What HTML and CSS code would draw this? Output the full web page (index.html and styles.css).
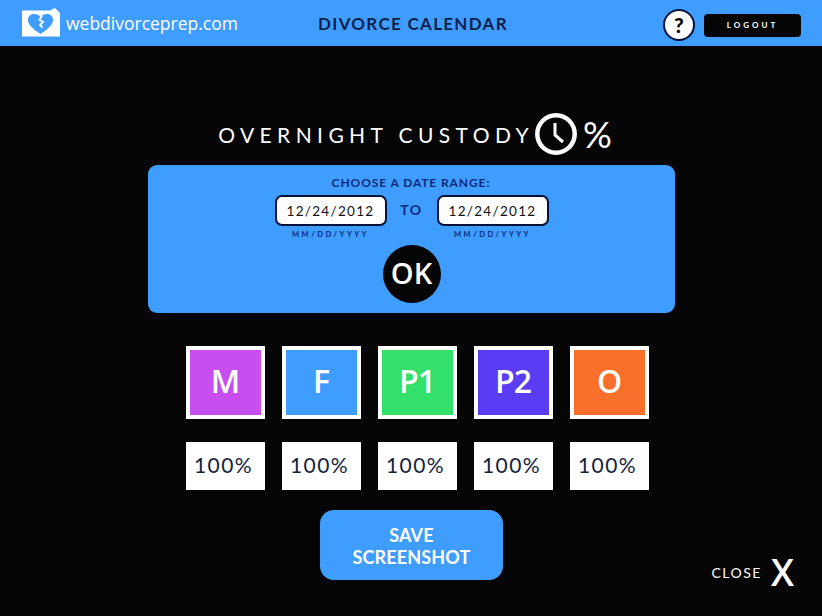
FILE: index.html
```html
<!DOCTYPE html>
<html>
<head>
    <title>Divorce Calendar</title>
    <meta name="viewport" content="width=device-width, initial-scale=1">
    <link rel="stylesheet" href="styles.css">
</head>
<body>
    <header class="topbar">
        <div class="brand">
            <svg class="brand-icon" width="38" height="30" viewBox="0 0 38 30">
                <path d="M0 2.500 H28 L33 0 L38 5 V28.500 H0 Z" fill="#fff"/>
                <path d="M18.500 26 C12 21.500 6 17.500 6 11.500 C6 8 9 6 12 6 C15 6 17 7 18.500 9 C20 7 22 6 25 6 C28 6 31 8 31 11.500 C31 17.500 25 21.500 18.500 26 Z" fill="#3f9dff"/>
                <path d="M20 7.500 L17.500 12 L21 14 L18 17 L20.500 19.500" fill="none" stroke="#fff" stroke-width="1.800"/>
            </svg>
            <span class="brand-name">webdivorceprep.com</span>
        </div>
        <h1 class="page-title">DIVORCE CALENDAR</h1>
        <div class="top-actions">
            <button class="help">?</button>
            <button class="logout">LOGOUT</button>
        </div>
    </header>

    <main class="content">
        <h2 class="heading">
            <span class="heading-text">OVERNIGHT CUSTODY</span>
            <svg width="42" height="42" viewBox="0 0 42 42">
                <circle cx="21" cy="21" r="18.700" fill="none" stroke="#fff" stroke-width="4.500"/>
                <path d="M20 10 V22 L28 29" fill="none" stroke="#fff" stroke-width="3"/>
            </svg>
            <span class="heading-pct">%</span>
        </h2>

        <section class="range-panel">
            <p class="range-label">CHOOSE A DATE RANGE:</p>
            <div class="range-row">
                <div class="date-field">
                    <div class="date-box">12/24/2012</div>
                    <div class="date-hint">MM/DD/YYYY</div>
                </div>
                <span class="range-to">TO</span>
                <div class="date-field">
                    <div class="date-box">12/24/2012</div>
                    <div class="date-hint">MM/DD/YYYY</div>
                </div>
            </div>
            <button class="ok">OK</button>
        </section>

        <div class="people">
            <div class="person"><div class="swatch mother">M</div><div class="pct">100%</div></div>
            <div class="person"><div class="swatch father">F</div><div class="pct">100%</div></div>
            <div class="person"><div class="swatch p1">P1</div><div class="pct">100%</div></div>
            <div class="person"><div class="swatch p2">P2</div><div class="pct">100%</div></div>
            <div class="person"><div class="swatch other">O</div><div class="pct">100%</div></div>
        </div>

        <div class="bottom-row">
            <button class="save">SAVE<br>SCREENSHOT</button>
            <div class="close"><span class="close-label">CLOSE</span><span class="close-x">X</span></div>
        </div>
    </main>
</body>
</html>
```

FILE: styles.css
```css
html, body { margin: 0; height: 100%; }
body { background: #050505; font-family: Lato, "Open Sans", sans-serif; color: white; overflow: hidden; }
button { font-family: inherit; border: none; padding: 0; }

.topbar {
    display: grid;
    grid-template-columns: 1fr auto 1fr;
    align-items: center;
    height: 46px;
    background: #3f9dff;
}
.brand { display: flex; align-items: center; padding-left: 22px; }
.brand-icon { margin-right: 6px; margin-top: -1px; }
.brand-name { font-family: "Open Sans", sans-serif; font-size: 17.500px; color: white; }
.page-title {
    margin: 0 0 0 4px;
    font-size: 17px;
    font-weight: 700;
    letter-spacing: 1.300px;
    color: #0a1f4a;
}
.top-actions { display: flex; align-items: center; justify-content: flex-end; gap: 9px; padding-right: 21px; padding-top: 3px; }
.help {
    width: 32px;
    height: 32px;
    box-sizing: border-box;
    border-radius: 50%;
    border: 2px solid #04123a;
    background: white;
    color: #050505;
    font-size: 21px;
    font-weight: 900;
    line-height: 1;
}
.logout {
    width: 97px;
    height: 23px;
    border-radius: 4px;
    background: #050505;
    color: white;
    font-size: 8px;
    font-weight: 700;
    letter-spacing: 3px;
    margin-top: 1px;
}

.content { display: flex; flex-direction: column; align-items: center; }
.heading {
    display: flex;
    align-items: center;
    margin: 65px 0 0 8px;
    height: 46px;
    font-weight: 400;
}
.heading-text { font-size: 21px; letter-spacing: 5.400px; margin-right: 1px; }
.heading-pct { font-size: 36px; font-weight: 400; margin-left: 6px; }

.range-panel {
    box-sizing: border-box;
    width: 527px;
    height: 148px;
    margin-top: 8px;
    padding-top: 10px;
    border-radius: 9px;
    background: #3f9dff;
    display: flex;
    flex-direction: column;
    align-items: center;
}
.range-label { margin: 0; font-size: 12px; font-weight: 700; letter-spacing: 0.900px; color: #0a2a7a; }
.range-row { display: flex; align-items: flex-start; margin-top: 5px; margin-left: 1px; }
.date-field { display: flex; flex-direction: column; align-items: center; }
.date-box {
    box-sizing: border-box;
    width: 112px;
    height: 31px;
    border: 2px solid #04123a;
    border-radius: 7px;
    background: white;
    color: #111;
    font-size: 13.500px;
    letter-spacing: 1.300px;
    line-height: 28px;
    text-align: center;
}
.date-hint { margin-top: 4px; font-size: 7.500px; font-weight: 700; letter-spacing: 2.500px; color: #0a2a7a; }
.range-to { width: 50px; text-align: center; font-size: 14px; font-weight: 700; letter-spacing: 1.500px; color: #0a2a7a; margin-top: 6px; }
.ok {
    width: 58px;
    height: 58px;
    margin-top: 6px;
    margin-left: 1px;
    padding-bottom: 4px;
    border-radius: 50%;
    background: #050505;
    color: white;
    font-family: "Open Sans", sans-serif;
    font-size: 29px;
    font-weight: 600;
}

.people { display: flex; gap: 17px; margin-top: 33px; margin-left: 12px; }
.person { display: flex; flex-direction: column; gap: 23px; }
.swatch {
    box-sizing: border-box;
    width: 79px;
    height: 73px;
    padding-bottom: 4px;
    border: 4px solid white;
    display: flex;
    align-items: center;
    justify-content: center;
    font-family: "Open Sans", sans-serif;
    font-size: 32px;
    letter-spacing: -1px;
    font-weight: 600;
    color: white;
}
.mother { background: #c94ef0; }
.father { background: #3f9dff; }
.p1 { background: #33e06a; }
.p2 { background: #5a3cf5; }
.other { background: #f9702a; }
.pct {
    width: 79px;
    height: 48px;
    box-sizing: border-box;
    padding-right: 3px;
    background: white;
    color: #14233c;
    font-size: 21px;
    letter-spacing: 1.400px;
    line-height: 46px;
    text-align: center;
}

.bottom-row { display: grid; grid-template-columns: 1fr auto 1fr; width: 100%; margin-top: 20px; }
.save {
    grid-column: 2;
    width: 183px;
    height: 70px;
    padding-top: 1px;
    border-radius: 14px;
    background: #3f9dff;
    color: white;
    font-size: 18px;
    font-weight: 700;
    line-height: 22px;
    letter-spacing: 0.150px;
    margin-left: 1px;
}
.close { grid-column: 3; display: flex; align-items: center; justify-content: flex-end; align-self: end; padding-right: 28px; margin-bottom: -17px; }
.close-label { font-size: 14px; letter-spacing: 1.500px; margin-right: 9px; margin-top: 2px; margin-left: -1px; }
.close-x { font-family: "Open Sans", sans-serif; font-size: 37px; font-weight: 600; }
```
